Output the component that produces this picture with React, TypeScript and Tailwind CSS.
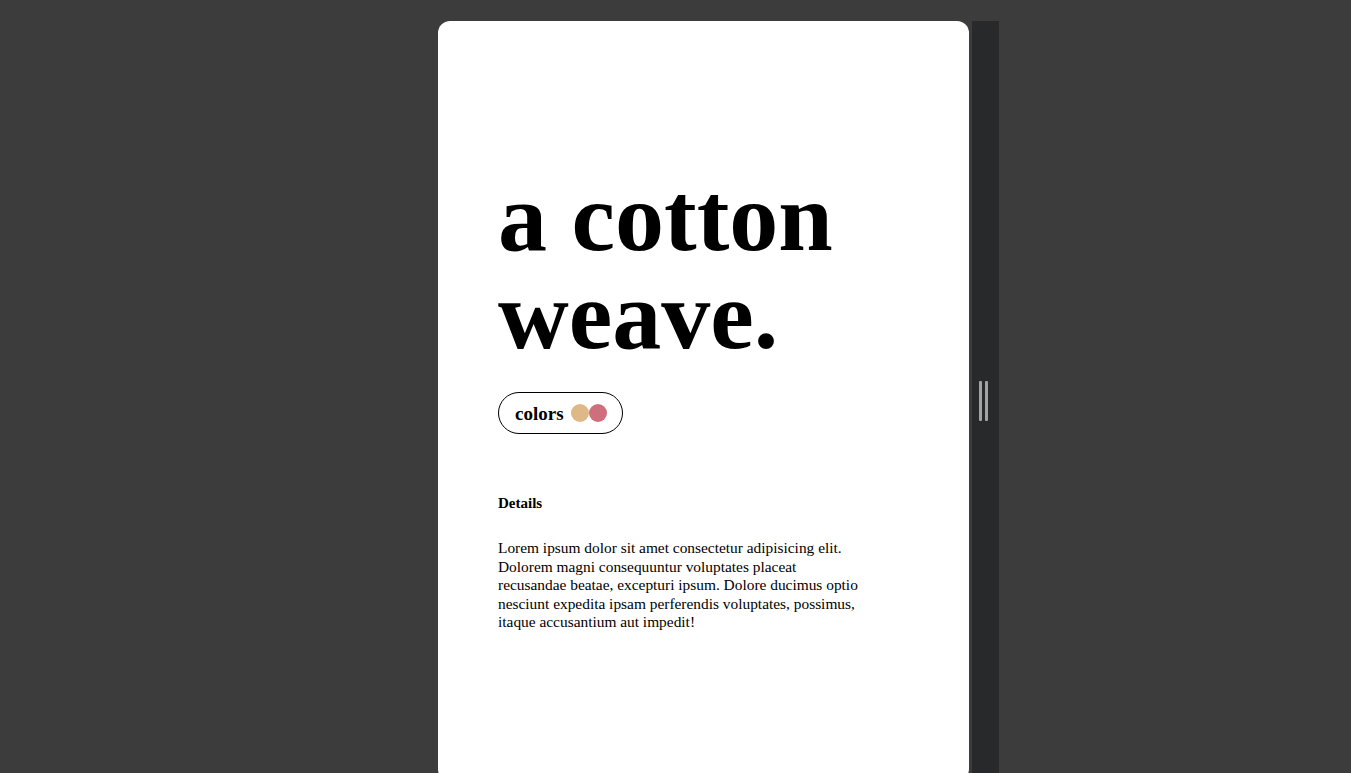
import React from "react";

export default function App() {
  return (
    <div className="min-h-[773px] h-[773px] overflow-hidden bg-[#3c3c3c] pl-[438px] pt-[21px] flex items-start" style={{ fontFamily: '"Liberation Serif", "Times New Roman", serif' }}>
      <div className="w-[531px] h-[760px] bg-white rounded-[12px] pl-[60px] pt-[147px] text-black">
        <h1 className="font-bold text-[98px] leading-[98px] m-0">
          a cotton
          <br />
          weave.
        </h1>
        <div className="mt-[28px] inline-flex items-center h-[42px] border border-black rounded-full pl-[16px] pr-[15px]">
          <span className="font-bold text-[19px] leading-none">colors</span>
          <span className="ml-[7px] w-[18px] h-[18px] rounded-full bg-[#deb887]" />
          <span className="w-[18px] h-[18px] rounded-full bg-[#cf6e7d]" />
        </div>
        <h4 className="mt-[61px] font-bold text-[15px] leading-[normal]">Details</h4>
        <p className="mt-[27px] text-[15.4px] leading-[18.5px] max-w-[368px]">
          Lorem ipsum dolor sit amet consectetur adipisicing elit. Dolorem magni consequuntur voluptates placeat recusandae beatae, excepturi ipsum. Dolore ducimus optio nesciunt expedita ipsam perferendis voluptates, possimus, itaque accusantium aut impedit!
        </p>
      </div>
      <div className="ml-[3px] w-[27px] h-[760px] bg-[#28292b] flex items-center justify-center">
        <div className="flex gap-[3px] mr-[4px]">
          <span className="block w-[3px] h-[40px] bg-[#a3a3a3] rounded-[1px]" />
          <span className="block w-[3px] h-[40px] bg-[#a3a3a3] rounded-[1px]" />
        </div>
      </div>
    </div>
  );
}
